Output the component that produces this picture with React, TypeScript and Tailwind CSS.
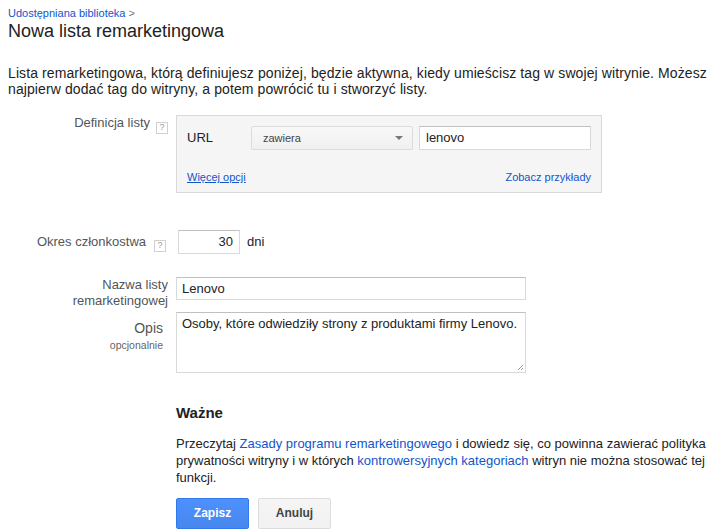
import React from "react";

function Help() {
  return (
    <span className="ml-[6px] inline-flex h-[12px] w-[12px] items-center justify-center border border-[#d0d0d0] bg-white text-[9px] leading-none text-[#999]">
      ?
    </span>
  );
}

export default function App() {
  return (
    <div
      className="min-h-[530px] w-[727px] bg-white text-[13px] text-[#222]"
      style={{ fontFamily: '"Liberation Sans", Arial, sans-serif' }}
    >
      <div className="px-[8px] pt-[6px]">
        <div className="text-[11px] leading-[14px] text-[#1155cc]">
          Udostępniana biblioteka <span className="text-[#777]">&gt;</span>
        </div>
        <h1 className="text-[18px] leading-[22px] text-[#222]">Nowa lista remarketingowa</h1>
        <p className="mt-[23px] w-[712px] text-[14px] leading-[16px] tracking-[0.1px] text-[#222]">
          Lista remarketingowa, którą definiujesz poniżej, będzie aktywna, kiedy umieścisz tag w swojej witrynie. Możesz
          <br />
          najpierw dodać tag do witryny, a potem powrócić tu i stworzyć listy.
        </p>
      </div>

      <div className="mt-[18px] grid grid-cols-[168px_1fr] gap-x-[8px]">
        {/* Definicja listy */}
        <div className="flex items-start justify-end leading-[16px] text-[#555]">
          <span>Definicja listy</span>
          <span className="mt-[3px]">
            <Help />
          </span>
        </div>
        <div>
          <div className="h-[78px] w-[426px] border border-[#d9d9d9] bg-[#f5f5f5] px-[10px] pt-[10px]">
            <div className="flex items-center">
              <span className="w-[64px] text-[13px]">URL</span>
              <div className="flex h-[24px] w-[162px] items-center justify-between rounded-[2px] border border-[#dcdcdc] bg-gradient-to-b from-[#f8f8f8] to-[#f0f0f0] pl-[11px] pr-[9px] text-[11px] text-[#444]">
                <span>zawiera</span>
                <span className="h-0 w-0 border-x-[4px] border-t-[4px] border-x-transparent border-t-[#777]" />
              </div>
              <div className="ml-[6px] flex h-[24px] w-[172px] items-center border border-[#d9d9d9] border-t-[#c0c0c0] bg-white pl-[6px] text-[13px]">
                lenovo
              </div>
            </div>
            <div className="mt-[19px] flex justify-between text-[11px] text-[#1155cc]">
              <span className="underline">Więcej opcji</span>
              <span>Zobacz przykłady</span>
            </div>
          </div>
        </div>

        {/* Okres */}
        <div className="mt-[37px] flex items-start justify-end pt-[4px] leading-[16px] text-[#555]">
          <span>Okres członkostwa</span>
          <span className="ml-[2px] mt-[2px]">
            <Help />
          </span>
          <span className="w-[2px]" />
        </div>
        <div className="mt-[37px] flex items-center">
          <div className="ml-[2px] flex h-[24px] w-[62px] items-center justify-end border border-[#d9d9d9] border-t-[#c0c0c0] bg-white pr-[6px]">
            30
          </div>
          <span className="ml-[7px]">dni</span>
        </div>

        {/* Nazwa */}
        <div className="mt-[23px] text-right leading-[16px] text-[#555]">
          Nazwa listy
          <br />
          remarketingowej
        </div>
        <div className="mt-[23px]">
          <div className="flex h-[23px] w-[350px] items-center border border-[#d9d9d9] border-t-[#c0c0c0] bg-white pl-[5px]">
            Lenovo
          </div>
        </div>

        {/* Opis */}
        <div className="mt-[3px] flex flex-col items-end pr-[5px] pt-[8px] text-[#555]">
          <span className="text-[14px] leading-[16px]">Opis</span>
          <span className="mt-[3px] text-[10.5px] leading-[12px] text-[#666]">opcjonalnie</span>
        </div>
        <div className="mt-[3px]">
          <div className="relative h-[61px] w-[350px] border border-[#d9d9d9] border-t-[#c0c0c0] bg-white px-[5px] pt-[3px] leading-[16px]">
            Osoby, które odwiedziły strony z produktami firmy Lenovo.
            <svg className="absolute bottom-[1px] right-[1px]" width="7" height="7" viewBox="0 0 7 7">
              <path d="M6 1L1 6M6 4L4 6" stroke="#999" strokeWidth="1" />
            </svg>
          </div>
        </div>

        {/* Ważne */}
        <div />
        <div className="mt-[31px]">
          <div className="text-[15px] font-bold leading-[18px] text-[#222]">Ważne</div>
          <p className="mt-[13px] w-[545px] leading-[17px] text-[#222]">
            Przeczytaj <span className="text-[#1155cc]">Zasady programu remarketingowego</span> i dowiedz się, co
            powinna zawierać polityka
            <br />
            prywatności witryny i w których <span className="text-[#1155cc]">kontrowersyjnych kategoriach</span> witryn
            nie można stosować tej
            <br />
            funkcji.
          </p>
          <div className="mt-[12px] flex gap-[9px]">
            <button className="h-[31px] w-[73px] rounded-[2px] border border-[#3079ed] bg-gradient-to-b from-[#4d90fe] to-[#4787ed] pb-[1px] text-[12px] font-bold text-white">
              Zapisz
            </button>
            <button className="h-[31px] w-[73px] rounded-[2px] border border-[#dcdcdc] bg-gradient-to-b from-[#f5f5f5] to-[#f1f1f1] pb-[1px] text-[12px] font-bold text-[#444]">
              Anuluj
            </button>
          </div>
        </div>
      </div>
    </div>
  );
}
